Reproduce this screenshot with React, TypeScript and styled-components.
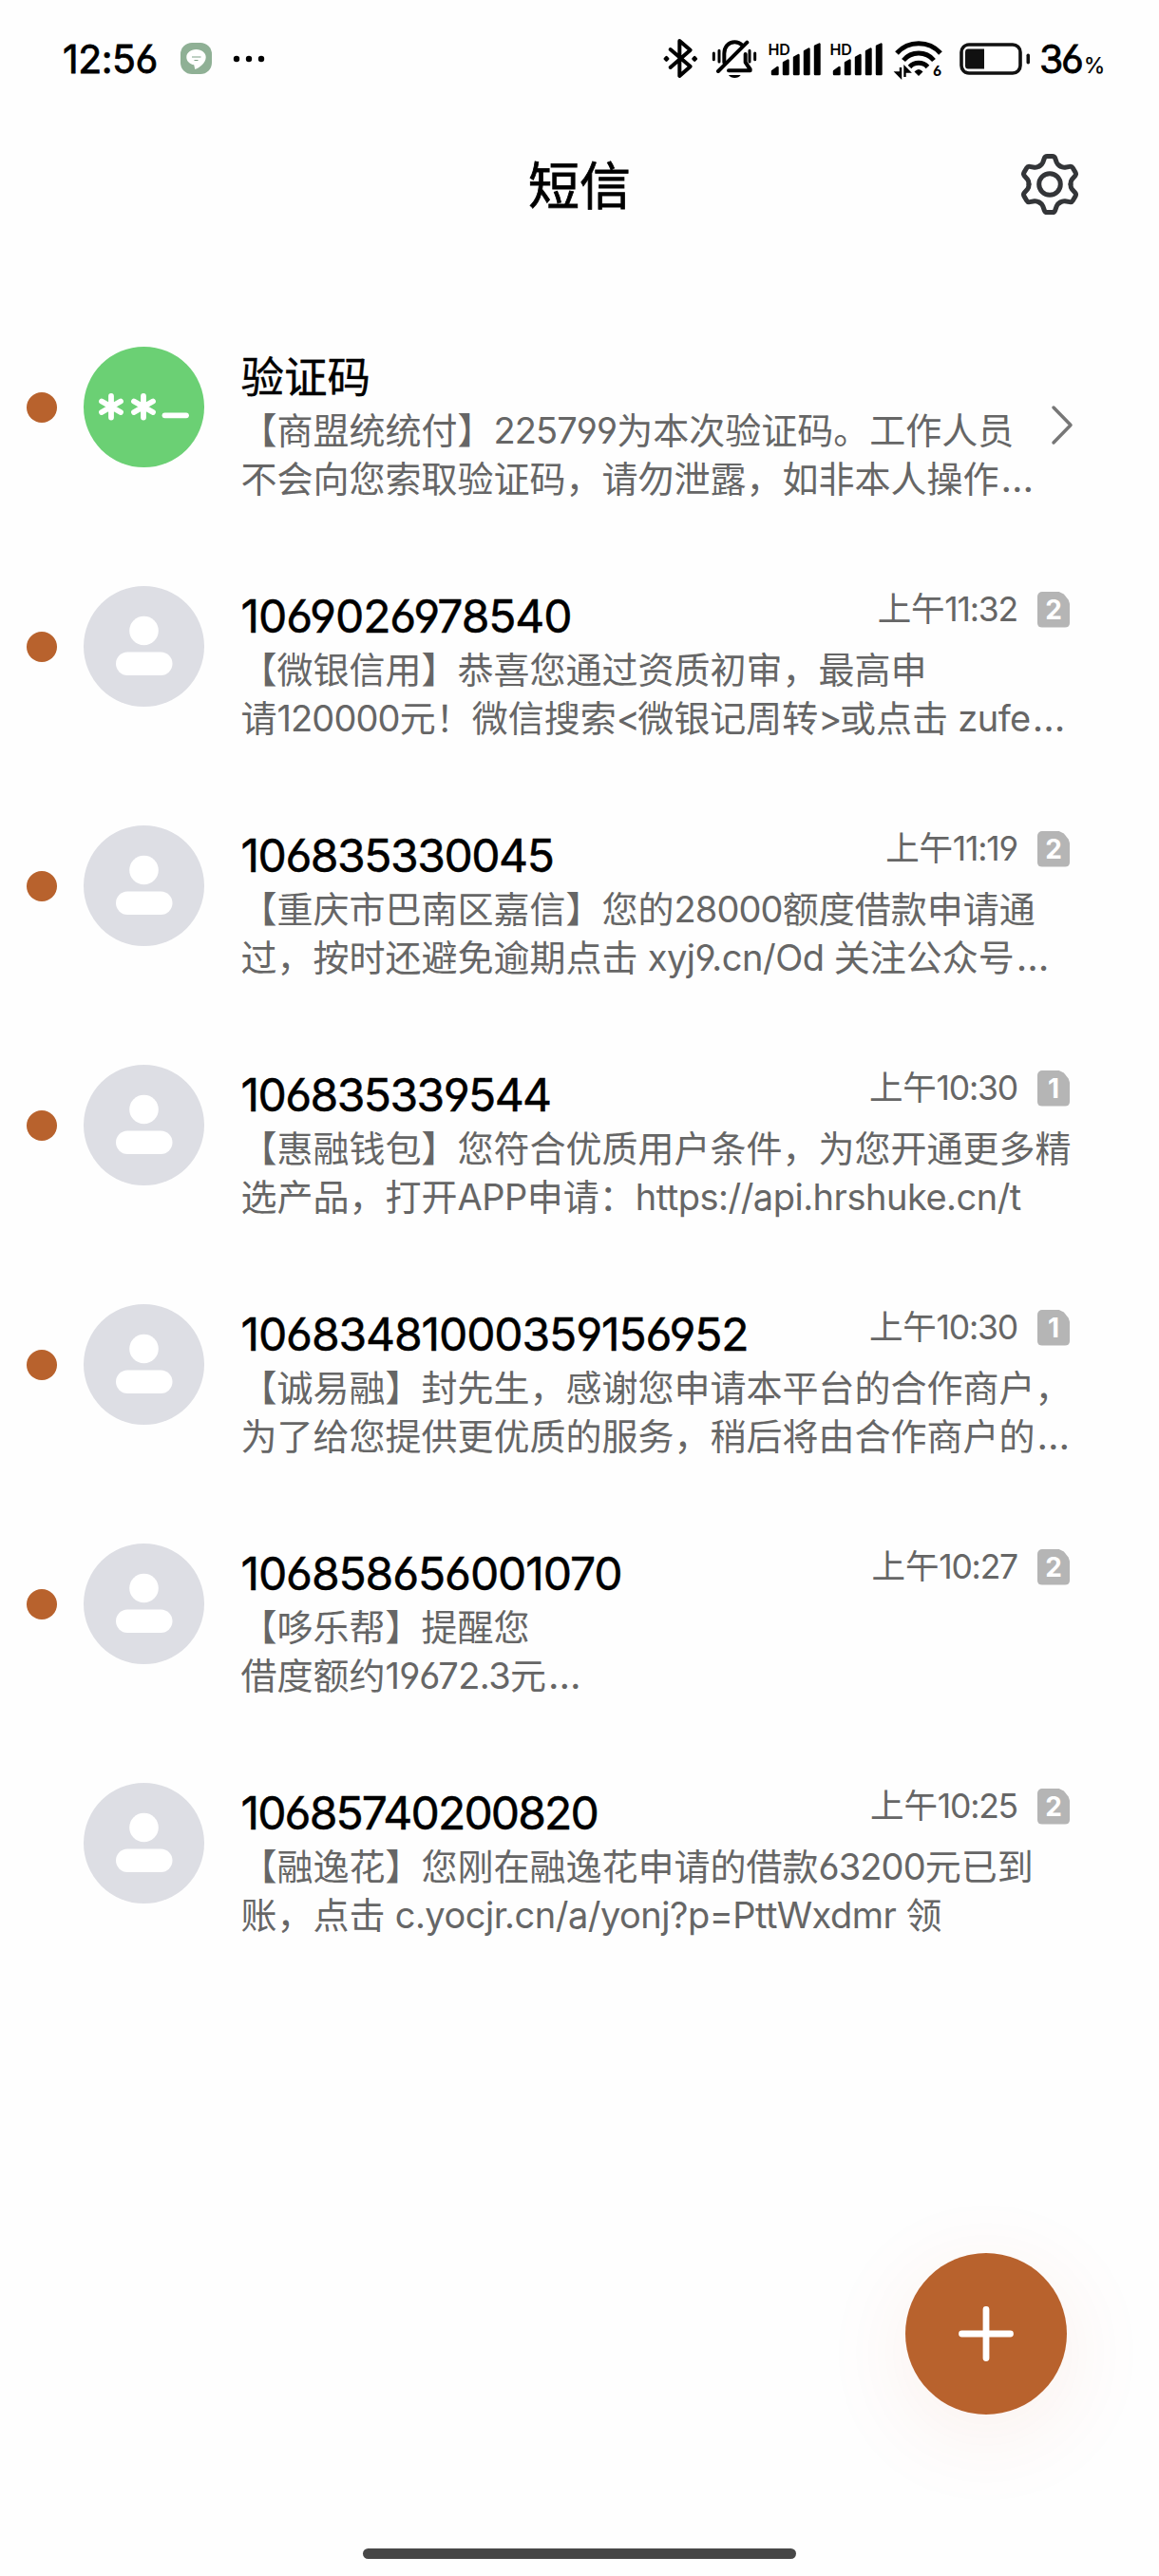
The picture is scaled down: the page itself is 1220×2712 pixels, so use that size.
import React from 'react';
import styled, { createGlobalStyle } from 'styled-components';

const ACCENT = '#b8622d';

const GlobalStyle = createGlobalStyle`
  * { box-sizing: border-box; }
  body {
    margin: 0;
    background: #fefefe;
    font-family: Inter, 'Noto Sans CJK SC', sans-serif;
    font-feature-settings: 'cv03', 'cv04';
    color: #000;
  }
`;

const Screen = styled.main`
  position: relative;
  width: 1220px;
  height: 2712px;
  overflow: hidden;
  display: flex;
  flex-direction: column;
`;

/* ---------- status bar ---------- */

const StatusBar = styled.header`
  height: 123px;
  padding: 0 58px 0 66px;
  display: flex;
  align-items: center;
  justify-content: space-between;
`;

const StatusGroup = styled.div`
  display: flex;
  align-items: center;
`;

const Clock = styled.span`
  width: 124px;
  font-size: 41px;
  letter-spacing: -0.5px;
  -webkit-text-stroke: 0.8px #000;
`;

const Glyph = styled.svg<{ $gap?: number }>`
  display: block;
  flex: none;
  overflow: visible;
  margin-right: ${(p) => p.$gap ?? 0}px;
`;

const BatteryLevel = styled.span`
  display: flex;
  align-items: baseline;
  width: 68px;
  margin-left: 9px;
  font-size: 41px;
  letter-spacing: -2.2px;
  white-space: nowrap;
  -webkit-text-stroke: 0.8px #000;
`;

const Percent = styled.small`
  margin-left: 2px;
  font-size: 23px;
  -webkit-text-stroke: 0.2px #000;
`;

/* ---------- title bar ---------- */

const TitleBar = styled.div`
  height: 141px;
  padding-right: 82px;
  display: grid;
  grid-template-columns: 1fr auto 1fr;
  align-items: center;
`;

const PageTitle = styled.h1`
  grid-column: 2;
  margin: 0 -41px 0 41px;
  padding-bottom: 3px;
  font-size: 54px;
  font-weight: 400;
  -webkit-text-stroke: 0.8px #000;
`;

const SettingsButton = styled.button`
  justify-self: end;
  padding: 0;
  border: 0;
  background: none;
`;

/* ---------- conversation list ---------- */

const List = styled.ul`
  margin: 0;
  padding: 38.5px 0 0;
  list-style: none;
`;

const Row = styled.li`
  height: 252px;
  padding: 62px 94px 0 28px;
  display: flex;
  align-items: flex-start;
`;

const UnreadDot = styled.span<{ $on: boolean }>`
  flex: none;
  width: 32px;
  height: 32px;
  margin: 48px 28px 0 0;
  border-radius: 50%;
  background: ${(p) => (p.$on ? ACCENT : 'transparent')};
`;

const Avatar = styled.div<{ $color: string }>`
  flex: none;
  width: 127px;
  height: 127px;
  margin-right: 38.5px;
  border-radius: 50%;
  background: ${(p) => p.$color};
`;

const Content = styled.div`
  flex: 1;
  min-width: 0;
`;

const Heading = styled.div`
  height: 63px;
  display: flex;
  align-items: flex-start;
  justify-content: space-between;
`;

const Sender = styled.h2<{ $cjk?: boolean; $tracking: number }>`
  margin: 0;
  padding-top: ${(p) => (p.$cjk ? 3 : 2)}px;
  font-size: ${(p) => (p.$cjk ? 45.5 : 48)}px;
  line-height: 60px;
  font-weight: 400;
  letter-spacing: ${(p) => p.$tracking}px;
  white-space: nowrap;
  -webkit-text-stroke: ${(p) => (p.$cjk ? 0.4 : 0.5)}px #000;
`;

const Meta = styled.div`
  display: flex;
  align-items: center;
  gap: 21px;
  height: 50px;
  color: #666;
`;

const Time = styled.time`
  font-size: 35.5px;
  line-height: 50px;
  letter-spacing: -0.2px;
  white-space: nowrap;
`;

const SimBadge = styled.span`
  width: 34px;
  height: 38px;
  border-radius: 5px;
  background: #b5b5b5;
  clip-path: polygon(0 0, 64% 0, 82% 8%, 96% 24%, 100% 34%, 100% 100%, 0 100%);
  color: #fff;
  font-size: 28px;
  line-height: 39px;
  font-weight: 700;
  text-align: center;
`;

const Line = styled.p`
  margin: 0;
  height: 51.4px;
  line-height: 51.4px;
  font-size: 38px;
  color: #666;
  white-space: nowrap;
`;

const Run = styled.span<{ $tracking: number }>`
  letter-spacing: ${(p) => p.$tracking}px;
`;

const Ellipsis = styled.span`
  margin-left: 2px;
  font-size: 40px;
  line-height: 1;
`;

const Chevron = styled(Glyph)`
  margin: 61px -4px 0 0;
`;

/* ---------- floating controls ---------- */

const ComposeButton = styled.button`
  position: absolute;
  left: 953px;
  top: 2372px;
  width: 170px;
  height: 170px;
  padding: 0;
  border: 0;
  border-radius: 50%;
  background: ${ACCENT};
  box-shadow: 0 20px 100px rgba(200, 70, 30, 0.08);
  display: flex;
  align-items: center;
  justify-content: center;
`;

const HomeIndicator = styled.div`
  width: 456px;
  height: 11px;
  margin: auto auto 18px;
  border-radius: 6px;
  background: #474747;
`;

/* ---------- icons ---------- */

const AppIcon = () => (
  <Glyph $gap={23} width="33" height="33" viewBox="0 0 33 33">
    <rect width="33" height="33" rx="12" fill="#8fb095" />
    <path d="M16.5 7C10.500 7 6.300 10.700 6.300 15.200C6.300 19.500 9.800 22.500 14.200 23.200L15.300 28C20 26.500 26.700 21 26.700 15.200C26.700 10.700 22.500 7 16.500 7Z" fill="#fff" />
    <path d="M12 15H21.500M14.500 18.500H18.500" stroke="#7fa287" strokeWidth="1.200" />
  </Glyph>
);

const MoreDots = () => (
  <Glyph width="34" height="8" viewBox="0 0 34 8">
    <circle cx="3" cy="4" r="3.200" />
    <circle cx="16" cy="4" r="3.200" />
    <circle cx="29" cy="4" r="3.200" />
  </Glyph>
);

const Bluetooth = () => (
  <Glyph $gap={13} width="39" height="43" viewBox="51 60 117 129">
    <path d="M77 96L140 150L106 180V69L140 98L77 153" fill="none" stroke="#000" strokeWidth="12" strokeLinecap="round" strokeLinejoin="round" />
    <rect x="57" y="118" width="15" height="15" rx="4" transform="rotate(45 64.500 125.500)" />
    <rect x="146" y="118" width="15" height="15" rx="4" transform="rotate(45 153.500 125.500)" />
  </Glyph>
);

const BellOff = () => (
  <Glyph $gap={11} width="49" height="43" viewBox="212 61 147 129">
    <g fill="none" stroke="#000" strokeLinecap="round" strokeLinejoin="round">
      <path d="M219 109V129M236 101V136M332 101V136M349 109V129" strokeWidth="9" />
      <path d="M252 138V110C252 88 266 74 285 74C296 74 303 78 309 84" strokeWidth="12" />
      <path d="M319 112V138L334 160V164H266" strokeWidth="12" />
      <path d="M233 166L324 75" strokeWidth="12" />
    </g>
    <path d="M266 178H304C298 190 272 190 266 178Z" />
  </Glyph>
);

const Signal = ({ gap }: { gap: number }) => (
  <Glyph $gap={gap} width="55" height="36" viewBox="0 0 55 36">
    <text x="-0.500" y="13.500" fontSize="16" fontWeight="600" letterSpacing="-0.300">HD</text>
    <g stroke="#000" strokeWidth="2.400" strokeLinejoin="round">
      <path d="M4 34V31L9.500 27V34Z" />
      <path d="M16 34V22L20.500 19.500V34Z" />
      <path d="M27 34V16.500L31.500 14V34Z" />
      <path d="M38 34V10L42.500 7.500V34Z" />
      <path d="M49 34V4.500L53.500 2.500V34Z" />
    </g>
  </Glyph>
);

const Wifi = () => (
  <Glyph $gap={17} width="51" height="40" viewBox="944 42 51 40">
    <g fill="none" stroke="#000" strokeWidth="5">
      <path d="M946 56A31 31 0 0 1 992 56" />
      <path d="M953 63.500A21 21 0 0 1 985 63.500" />
      <path d="M959.500 70.500A13 13 0 0 1 978.500 70.500" />
    </g>
    <path d="M964.500 75.500Q969 70.500 973.500 75.500L969 80Z" />
    <path d="M950 71V81L945.500 76.500H949M954.500 81V71L959 75.500H955.500" fill="none" stroke="#000" strokeWidth="2.400" />
    <text x="984" y="80" fontSize="15" fontWeight="700">6</text>
  </Glyph>
);

const Battery = () => (
  <Glyph width="75" height="34" viewBox="0 0 75 34">
    <rect x="2" y="2" width="62" height="30" rx="8" fill="#fff" stroke="#111" strokeWidth="3.600" />
    <path d="M9 6.500H26V27.500H9Q6 27.500 6 24.500V9.500Q6 6.500 9 6.500Z" fill="#111" />
    <rect x="70.500" y="11.500" width="3.500" height="11" rx="1.700" fill="#111" />
  </Glyph>
);

const LOBE =
  'M-11 -19C-9.200 -20 -8 -21 -7.300 -22.800L-5.600 -27.600Q-4.900 -29.600 -2.800 -29.600H2.800Q4.900 -29.600 5.600 -27.600L7.300 -22.800C8 -21 9.200 -20 11 -19';

const Gear = () => (
  <Glyph width="66" height="66" viewBox="-33 -33 66 66">
    <g fill="none" stroke="#333538" strokeWidth="5" strokeLinecap="round">
      {[0, 60, 120, 180, 240, 300].map((angle) => (
        <path key={angle} d={LOBE} transform={`rotate(${angle})`} />
      ))}
      <circle r="11.300" />
    </g>
  </Glyph>
);

const CodeMark = () => (
  <svg width="127" height="127" viewBox="0 0 127 127">
    <g stroke="#fff" strokeWidth="5.800" strokeLinecap="round">
      {[29, 63].map((x) => (
        <path key={x} d={`M${x} 52V74.500M${x - 10} 57.500L${x + 10} 69M${x + 10} 57.500L${x - 10} 69`} />
      ))}
      <path d="M85.500 72.300H108" />
    </g>
  </svg>
);

const PersonMark = () => (
  <svg width="127" height="127" viewBox="0 0 127 127">
    <circle cx="63.500" cy="47" r="15.300" fill="#fff" />
    <rect x="34" y="69.500" width="59.500" height="24.500" rx="12.200" fill="#fff" />
  </svg>
);

/* ---------- data ---------- */

type Conversation = {
  sender: string;
  tracking?: number;
  time?: string;
  sim?: number;
  unread: boolean;
  lines: string[];
};

const conversations: Conversation[] = [
  {
    sender: '验证码',
    unread: true,
    lines: ['【商盟统统付】225799为本次验证码。工作人员', '不会向您索取验证码，请勿泄露，如非本人操作…'],
  },
  {
    sender: '1069026978540',
    tracking: -1.08,
    time: '上午11:32',
    sim: 2,
    unread: true,
    lines: ['【微银信用】恭喜您通过资质初审，最高申', '请120000元！微信搜索<微银记周转>或点击 zufe…'],
  },
  {
    sender: '106835330045',
    tracking: -1.45,
    time: '上午11:19',
    sim: 2,
    unread: true,
    lines: ['【重庆市巴南区嘉信】您的28000额度借款申请通', '过，按时还避免逾期点击 xyj9.cn/Od 关注公众号…'],
  },
  {
    sender: '106835339544',
    tracking: -1.55,
    time: '上午10:30',
    sim: 1,
    unread: true,
    lines: ['【惠融钱包】您符合优质用户条件，为您开通更多精', '选产品，打开APP申请：https://api.hrshuke.cn/t'],
  },
  {
    sender: '10683481000359156952',
    tracking: -1.1,
    time: '上午10:30',
    sim: 1,
    unread: true,
    lines: ['【诚易融】封先生，感谢您申请本平台的合作商户，', '为了给您提供更优质的服务，稍后将由合作商户的…'],
  },
  {
    sender: '106858656001070',
    tracking: -1.1,
    time: '上午10:27',
    sim: 2,
    unread: true,
    lines: ['【哆乐帮】提醒您', '借度额约19672.3元…'],
  },
  {
    sender: '10685740200820',
    tracking: -1.85,
    time: '上午10:25',
    sim: 2,
    unread: false,
    lines: ['【融逸花】您刚在融逸花申请的借款63200元已到', '账，点击 c.yocjr.cn/a/yonj?p=PttWxdmr 领'],
  },
];

/* Tracking for each kind of run inside Chinese text. */
const trackingOf = (run: string) => {
  if (/^[<>]$/.test(run)) return -2.5;
  if (/^[\d:]+$/.test(run)) return -0.9;
  if (/^[\d.]+$/.test(run)) return -0.6;
  return -0.5;
};

const MixedText = ({ text }: { text: string }) => (
  <>
    {text.split(/([<>]|[\d.:]+(?![a-z])|[\x20-\x3b\x3d\x3f-\x7e]+|…)/).map((part, i) => {
      if (i % 2 === 0) return part;
      if (part === '…') return <Ellipsis key={i}>…</Ellipsis>;
      return (
        <Run key={i} $tracking={trackingOf(part)}>
          {part}
        </Run>
      );
    })}
  </>
);

const Timestamp = ({ value }: { value: string }) => (
  <Time>
    {value.slice(0, 2)}
    <Run $tracking={-1.2}>{value.slice(2)}</Run>
  </Time>
);

const ConversationRow = ({ item }: { item: Conversation }) => (
  <Row>
    <UnreadDot $on={item.unread} />
    <Avatar $color={item.time ? '#dddee4' : '#6bd074'}>{item.time ? <PersonMark /> : <CodeMark />}</Avatar>
    <Content>
      <Heading>
        <Sender $cjk={!item.time} $tracking={item.tracking ?? 0}>
          {item.sender}
        </Sender>
        {item.time && (
          <Meta>
            <Timestamp value={item.time} />
            <SimBadge>{item.sim}</SimBadge>
          </Meta>
        )}
      </Heading>
      {item.lines.map((text) => (
        <Line key={text}>
          <MixedText text={text} />
        </Line>
      ))}
    </Content>
    {!item.time && (
      <Chevron width="24" height="43" viewBox="0 0 24 43">
        <path d="M3 3L21 21.500L3 40" fill="none" stroke="#777" strokeWidth="3.500" strokeLinecap="round" strokeLinejoin="round" />
      </Chevron>
    )}
  </Row>
);

export default function App() {
  return (
    <Screen>
      <GlobalStyle />
      <StatusBar>
        <StatusGroup>
          <Clock>12:56</Clock>
          <AppIcon />
          <MoreDots />
        </StatusGroup>
        <StatusGroup>
          <Bluetooth />
          <BellOff />
          <Signal gap={10} />
          <Signal gap={13} />
          <Wifi />
          <Battery />
          <BatteryLevel>
            36<Percent>%</Percent>
          </BatteryLevel>
        </StatusGroup>
      </StatusBar>
      <TitleBar>
        <PageTitle>短信</PageTitle>
        <SettingsButton aria-label="设置">
          <Gear />
        </SettingsButton>
      </TitleBar>
      <List>
        {conversations.map((item) => (
          <ConversationRow key={item.sender} item={item} />
        ))}
      </List>
      <HomeIndicator />
      <ComposeButton aria-label="新建">
        <Glyph width="58" height="58" viewBox="0 0 58 58">
          <path d="M29 3.500V54.500M3.500 29H54.500" stroke="#fff" strokeWidth="6.800" strokeLinecap="round" />
        </Glyph>
      </ComposeButton>
    </Screen>
  );
}
